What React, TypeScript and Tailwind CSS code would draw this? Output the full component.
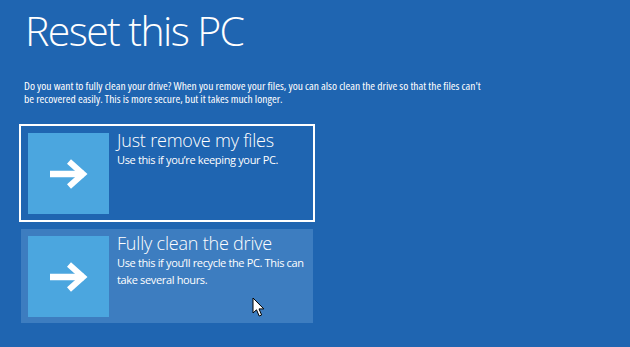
import React from 'react';

const ArrowTile: React.FC = () => (
    <div className="w-[81px] h-[81px] shrink-0 bg-[#4ba6df] flex items-center justify-center">
        <svg width="40" height="30" viewBox="0 0 40 30">
            <path d="M1 15 H35" stroke="#ffffff" strokeWidth="6.5" fill="none" />
            <path d="M20 2.5 L34 15 L20 27.5" stroke="#ffffff" strokeWidth="6" fill="none" strokeLinejoin="miter" />
        </svg>
    </div>
);

interface OptionProps {
    title: string;
    text: string;
    selected?: boolean;
}

const Option: React.FC<OptionProps> = ({ title, text, selected }) => (
    <div
        className={
            selected
                ? 'w-[296px] h-[98px] border-2 border-white p-[7px] flex gap-[8px]'
                : 'w-[296px] h-[98px] border-2 border-transparent bg-[#3d7dc0] bg-clip-padding p-[7px] flex gap-[8px]'
        }
    >
        <ArrowTile />
        <div className="flex flex-col -mt-[4px]">
            <div className="text-[18px] leading-[22px] font-light text-white tracking-[-0.2px]">{title}</div>
            <div className="text-[11px] leading-[17px] text-white tracking-[-0.35px]">{text}</div>
        </div>
    </div>
);

export default function App() {
    return (
        <div
            className="w-[630px] h-[347px] bg-[#1f65b1] relative overflow-hidden"
            style={{ fontFamily: '"Open Sans", "Noto Sans", sans-serif' }}
        >
            <div className="pl-[25px] pt-[6px]">
                <h1 className="text-[41px] leading-[48px] font-light text-white tracking-[-1.6px]">Reset this PC</h1>
                <p className="mt-[25px] -ml-[1px] text-[11.5px] leading-[13px] text-white font-stretch-[85%] max-w-[462px]">
                    Do you want to fully clean your drive? When you remove your files, you can also clean the drive so that the files can't be recovered easily. This is more secure, but it takes much longer.
                </p>
            </div>
            <div className="pl-[19px] mt-[19px] flex flex-col gap-[5px]">
                <Option title="Just remove my files" text="Use this if you’re keeping your PC." selected />
                <Option title="Fully clean the drive" text="Use this if you’ll recycle the PC. This can take several hours." />
            </div>
            <svg className="absolute left-[252px] top-[297px]" width="14" height="21" viewBox="0 0 14 21">
                <path
                    d="M1 1 L1 16 L4.5 12.8 L7.2 19 L9.6 18 L7 11.9 L11.8 11.9 Z"
                    fill="#ffffff"
                    stroke="#000000"
                    strokeWidth="1"
                    strokeLinejoin="miter"
                />
            </svg>
        </div>
    );
}
